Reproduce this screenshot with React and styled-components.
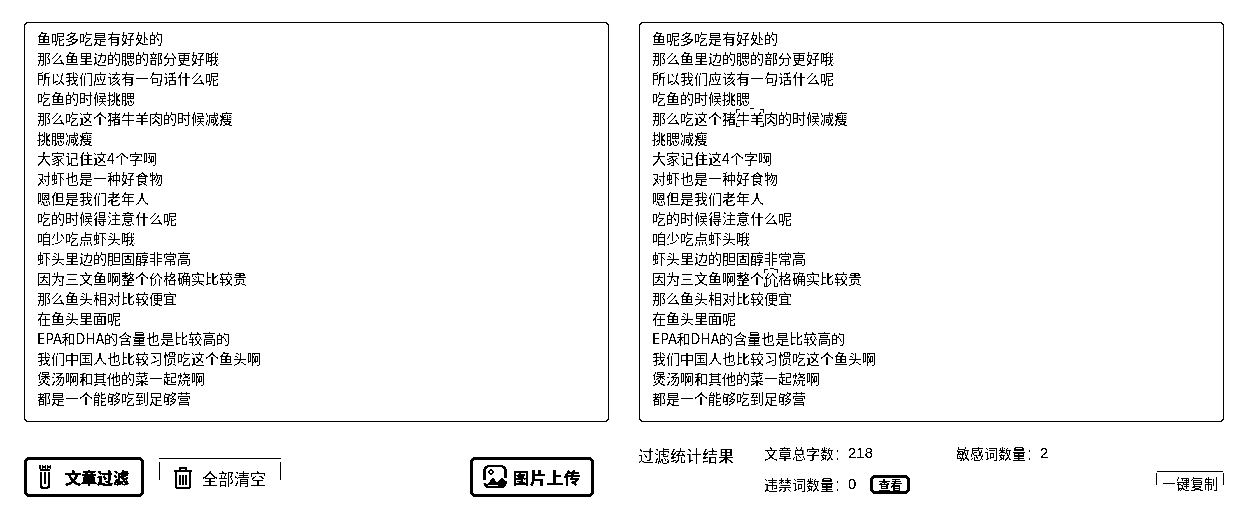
import React from "react";
import styled, { createGlobalStyle } from "styled-components";

const Global = createGlobalStyle`
  html, body { margin: 0; padding: 0; background: #fff; }
  body { font-family: "Noto Sans CJK SC", "Liberation Sans", sans-serif; color: #000; }
`;

const Page = styled.div`
  width: 1250px;
  height: 510px;
  overflow: hidden;
  background: #fff;
  padding: 22px 26px 0 24px;
  box-sizing: border-box;
  filter: grayscale(1) brightness(0.95) contrast(30);
`;

const Panels = styled.div`
  display: grid;
  grid-template-columns: 585px 585px;
  column-gap: 30px;
`;

const TextPanel = styled.div`
  height: 400px;
  box-sizing: border-box;
  border: 1px solid #000;
  border-radius: 4px;
  padding: 5px 12px;
  font-size: 14px;
  line-height: 20px;
`;

const Line = styled.div`
  white-space: nowrap;
`;

const Mark = styled.span`
  background:
    linear-gradient(#000, #000) 0 1px / 1px 4px no-repeat,
    linear-gradient(#000, #000) 0 1px / 4px 1px no-repeat,
    linear-gradient(#000, #000) 60% 0 / 4px 1px no-repeat,
    linear-gradient(#000, #000) 100% 1px / 1px 4px no-repeat,
    linear-gradient(#000, #000) 100% 1px / 4px 1px no-repeat,
    linear-gradient(#000, #000) 0 calc(100% - 1px) / 1px 4px no-repeat,
    linear-gradient(#000, #000) 0 calc(100% - 1px) / 4px 1px no-repeat,
    linear-gradient(#000, #000) 100% calc(100% - 1px) / 1px 4px no-repeat,
    linear-gradient(#000, #000) 100% calc(100% - 1px) / 4px 1px no-repeat;
`;

const Footer = styled.div`
  display: grid;
  grid-template-columns: 585px 585px;
  column-gap: 30px;
  margin-top: 24px;
`;

const LeftActions = styled.div`
  display: flex;
  align-items: flex-start;
  padding-top: 11px;
`;

const BoldButton = styled.button`
  display: flex;
  align-items: center;
  justify-content: center;
  gap: ${(p) => p.$gap}px;
  width: ${(p) => p.$w}px;
  height: 40px;
  margin-left: ${(p) => p.$ml || 0}px;
  box-sizing: border-box;
  border: 3px solid #000;
  border-radius: 5px;
  background: #fff;
  padding: 0;
  font: 700 16px "Noto Sans CJK SC", sans-serif;
  letter-spacing: ${(p) => p.$ls || 0}px;
  text-shadow: 0 0 1px #000;
  color: #000;
`;

const GhostButton = styled.button`
  position: relative;
  display: flex;
  align-items: center;
  gap: 10px;
  width: 122px;
  height: 34px;
  margin: 1px 0 0 15px;
  padding: 4px 0 0 15px;
  box-sizing: border-box;
  background: none;
  border: 0;
  border-top: 1px solid #000;
  font: 400 16px "Noto Sans CJK SC", sans-serif;
  color: #000;
  &::before, &::after {
    content: "";
    position: absolute;
    top: 3px;
    width: 1px;
    height: 18px;
    background: #000;
  }
  &::before { left: 0; }
  &::after { right: 0; }
`;

const Stats = styled.div`
  display: grid;
  grid-template-columns: 125px 192px 1fr auto;
  grid-template-rows: 31px 30px;
  margin-top: -1px;
  font-size: 14px;
  line-height: 20px;
`;

const StatsTitle = styled.div`
  font-size: 16px;
  line-height: 20px;
  margin-left: -1px;
`;

const Stat = styled.div`
  display: flex;
  align-items: center;
  height: 20px;
  margin-top: -2px;
  white-space: nowrap;
  grid-column: ${(p) => p.$col || "auto"};
`;

const Num = styled.span`
  font-family: "Liberation Sans", sans-serif;
  font-size: 15px;
`;

const ViewButton = styled.button`
  width: 40px;
  height: 19px;
  margin-left: 14px;
  margin-top: 1px;
  box-sizing: border-box;
  border: 3px solid #000;
  border-radius: 5px;
  background: #fff;
  padding: 0;
  font: 700 12px/13px "Noto Sans CJK SC", sans-serif;
  color: #000;
`;

const CopyButton = styled.button`
  position: relative;
  grid-column: 4;
  justify-self: end;
  width: 68px;
  height: 24px;
  margin-top: -5px;
  padding: 0;
  box-sizing: border-box;
  background: none;
  border: 0;
  font: 400 14px "Noto Sans CJK SC", sans-serif;
  color: #000;
  &::before {
    content: "";
    position: absolute;
    left: 1px; right: 1px; top: 0;
    border-top: 1px solid #000;
  }
  &::after {
    content: "";
    position: absolute;
    left: 0; right: 0; top: 2px;
    height: 12px;
    border-left: 1px solid #000;
    border-right: 1px solid #000;
  }
`;

const Trash = () => (
  <svg width="18" height="22" viewBox="0 0 18 22" fill="none" stroke="#000" strokeWidth="2">
    <path d="M0 4h18M6 4V1h6v3M2 5v15a1 1 0 0 0 1 1h12a1 1 0 0 0 1-1V5M6 8v10M9 8v10M12 8v10" />
  </svg>
);

const FilterIcon = () => (
  <svg width="12" height="26" viewBox="0 0 12 26" fill="none" stroke="#000">
    <path d="M0 3h12" strokeWidth="3" strokeDasharray="2 .6" />
    <path d="M1 6h10" strokeWidth="1.5" />
    <path d="M2 8v14q0 2 4 2t4-2V8" strokeWidth="2.4" />
    <path d="M6 8v12" strokeWidth="2.4" />
  </svg>
);

const Picture = () => (
  <svg width="24" height="26" viewBox="0 0 24 26">
    <rect x="1.5" y="2" width="21" height="21" rx="5" fill="none" stroke="#000" strokeWidth="2.6" strokeDasharray="26 3" />
    <circle cx="8" cy="8" r="2" fill="none" stroke="#000" strokeWidth="1.5" />
    <path d="M4 21l6-8 4 6 5-6 4 5-5 4-1 3-2-4z" fill="#000" />
  </svg>
);

const left = ["鱼呢多吃是有好处的","那么鱼里边的腮的部分更好哦","所以我们应该有一句话什么呢","吃鱼的时候挑腮","那么吃这个猪牛羊肉的时候减瘦","挑腮减瘦","大家记住这4个字啊","对虾也是一种好食物","嗯但是我们老年人","吃的时候得注意什么呢","咱少吃点虾头哦","虾头里边的胆固醇非常高","因为三文鱼啊整个价格确实比较贵","那么鱼头相对比较便宜","在鱼头里面呢","EPA和DHA的含量也是比较高的","我们中国人也比较习惯吃这个鱼头啊","煲汤啊和其他的菜一起烧啊","都是一个能够吃到足够营"];

const marked = (s) => {
  const m = s.match(/^(.*?)(牛羊|价)(.*)$/);
  if (!m) return s;
  return <>{m[1]}<Mark>{m[2]}</Mark>{m[3]}</>;
};

export default function App() {
  return (
    <Page>
      <Global />
      <Panels>
        <TextPanel>{left.map((l) => <Line key={l}>{l}</Line>)}</TextPanel>
        <TextPanel>{left.map((l) => <Line key={l}>{marked(l)}</Line>)}</TextPanel>
      </Panels>
      <Footer>
        <LeftActions>
          <BoldButton $w={120} $gap={14}><FilterIcon />文章过滤</BoldButton>
          <GhostButton><Trash />全部清空</GhostButton>
          <BoldButton $w={124} $ml={189} $gap={6} $ls={1}><Picture />图片上传</BoldButton>
        </LeftActions>
        <Stats>
          <StatsTitle>过滤统计结果</StatsTitle>
          <Stat>文章总字数：<Num>218</Num></Stat>
          <Stat>敏感词数量：<Num>2</Num></Stat>
          <span />
          <Stat $col="2 / 4">违禁词数量：<Num>0</Num><ViewButton>查看</ViewButton></Stat>
          <CopyButton>一键复制</CopyButton>
        </Stats>
      </Footer>
    </Page>
  );
}
